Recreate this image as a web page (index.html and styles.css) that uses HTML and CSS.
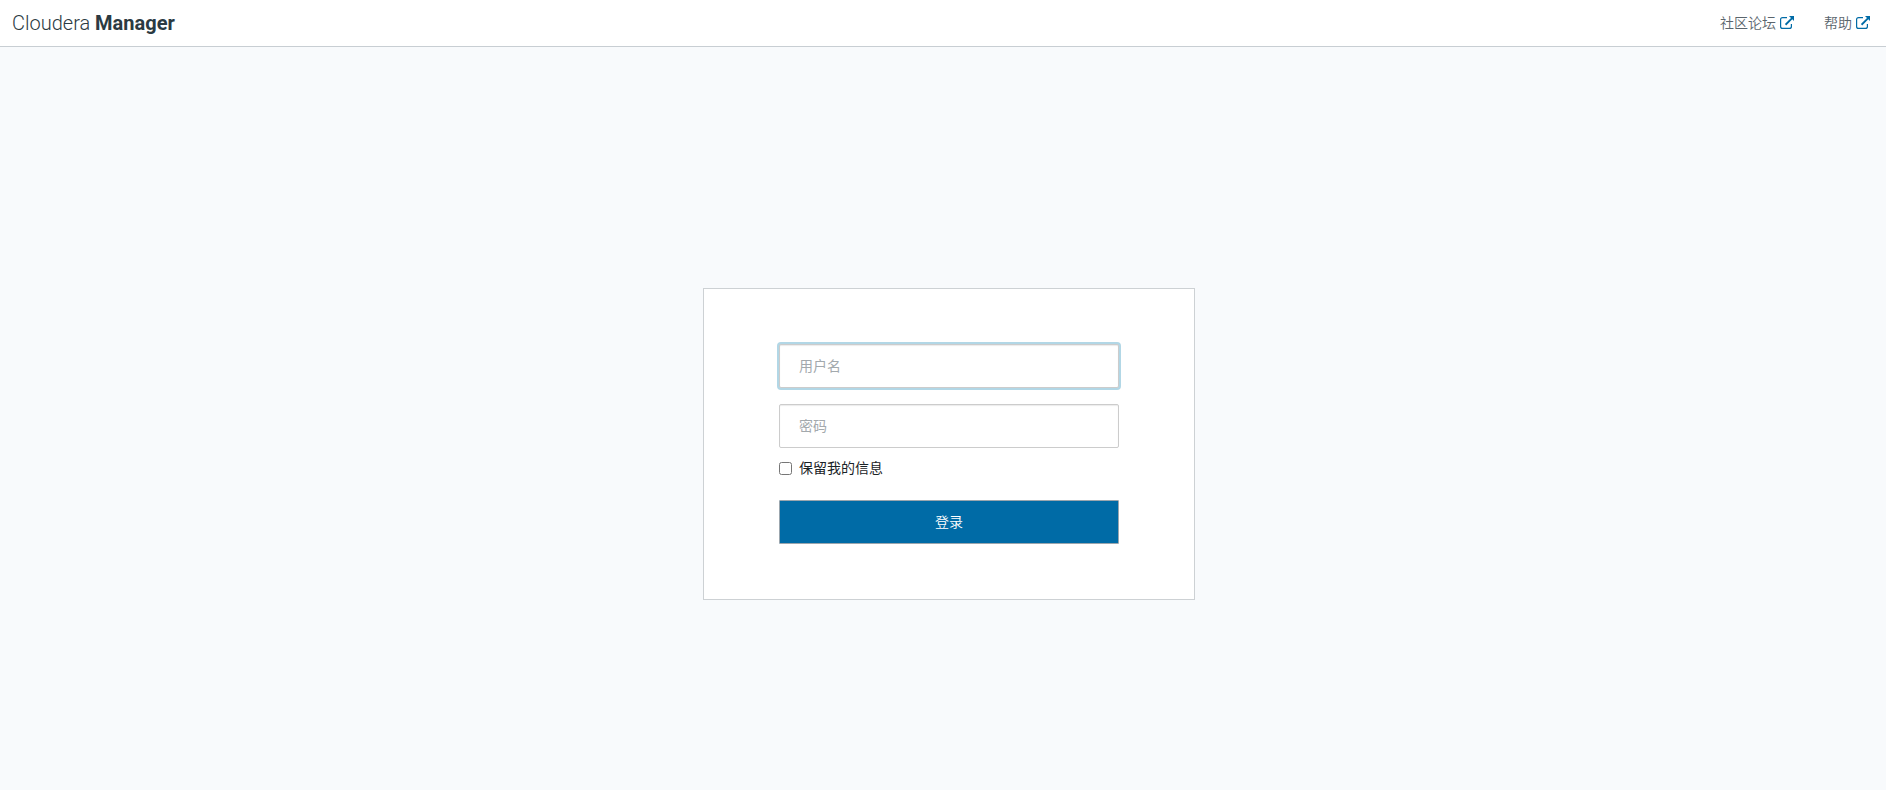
FILE: index.html
```html
<!DOCTYPE html>
<html lang="zh-CN">
<head>
    <meta charset="utf-8">
    <title>Cloudera Manager</title>
    <link rel="stylesheet" href="styles.css">
</head>
<body>
    <header class="navbar">
        <a href="#" class="brand">Cloudera <strong>Manager</strong></a>
        <nav class="navLinks">
            <a href="#">社区论坛
                <svg class="external" viewBox="0 0 14 14" aria-hidden="true">
                    <path d="M7 1.6H2.6Q.6 1.6 .6 3.6v6.8Q.6 12.4 2.6 12.4h6.8Q11.4 12.4 11.4 10.4V8" fill="none" stroke="currentColor" stroke-width="1.2"/>
                    <path d="M9 0H14v5l-1.7-1.7-6.1 6.1L4.9 8.1 11 2z" fill="currentColor"/>
                </svg>
            </a>
            <a href="#">帮助
                <svg class="external" viewBox="0 0 14 14" aria-hidden="true">
                    <path d="M7 1.6H2.6Q.6 1.6 .6 3.6v6.8Q.6 12.4 2.6 12.4h6.8Q11.4 12.4 11.4 10.4V8" fill="none" stroke="currentColor" stroke-width="1.2"/>
                    <path d="M9 0H14v5l-1.7-1.7-6.1 6.1L4.9 8.1 11 2z" fill="currentColor"/>
                </svg>
            </a>
        </nav>
    </header>
    <main class="content">
        <form class="loginForm">
            <input type="text" class="field" placeholder="用户名" aria-label="用户名" autofocus>
            <input type="password" class="field" placeholder="密码" aria-label="密码">
            <label class="remember">
                <input type="checkbox">
                保留我的信息
            </label>
            <button type="submit" class="submit">登录</button>
        </form>
    </main>
</body>
</html>
```
FILE: styles.css
```css
* {
    box-sizing: border-box;
}

body {
    display: flex;
    flex-direction: column;
    min-height: 100vh;
    margin: 0;
    background-color: #f8fafc;
    color: #1b2327;
    font-family: "Liberation Sans", "Noto Sans CJK SC", sans-serif;
    font-size: 14px;
    line-height: 20px;
}

.navbar {
    display: flex;
    align-items: center;
    justify-content: space-between;
    height: 47px;
    padding: 0 16px 0 12px;
    background-color: #fff;
    border-bottom: 1px solid #c8ced3;
}

.brand {
    color: #2b3a42;
    font-family: Roboto, sans-serif;
    font-size: 20px;
    font-weight: 300;
    text-decoration: none;
}

.brand strong {
    font-weight: 700;
}

.navLinks {
    display: flex;
    gap: 30px;
}

.navLinks a {
    display: flex;
    align-items: center;
    gap: 4px;
    color: #5a656d;
    font-weight: 350;
    text-decoration: none;
}

.external {
    width: 14px;
    height: 14px;
    color: #006ba6;
}

.content {
    display: flex;
    flex: 1;
    align-items: center;
    justify-content: center;
    padding: 51px 0 0 12px;
}

.loginForm {
    display: flex;
    flex-direction: column;
    width: 492px;
    max-width: 100%;
    padding: 55px 75px;
    background-color: #fff;
    border: 1px solid #cdd1d4;
}

.field {
    height: 44px;
    margin: 0 0 16px;
    padding: 0 19px;
    background-color: #fff;
    border: 1px solid #ccc;
    border-radius: 2px;
    box-shadow: inset 0 1px 1px rgba(0, 0, 0, 0.08);
    font: inherit;
}

.field::placeholder {
    color: #a3a9ad;
}

.field:focus {
    outline: none;
    box-shadow: inset 0 1px 1px rgba(0, 0, 0, 0.08), 0 0 0 2px #b2d7e6;
    caret-color: transparent;
}

.remember {
    display: flex;
    align-items: center;
    align-self: flex-start;
    gap: 7px;
    margin-bottom: 22px;
}

.remember input {
    width: 13px;
    height: 13px;
    margin: 0;
}

.field + .remember {
    margin-top: -6px;
}

.submit {
    height: 44px;
    padding: 0;
    background-color: #006ba6;
    border: 1px solid #9ba6ae;
    border-radius: 1px;
    color: #fff;
    font: inherit;
    font-weight: 350;
}
```
